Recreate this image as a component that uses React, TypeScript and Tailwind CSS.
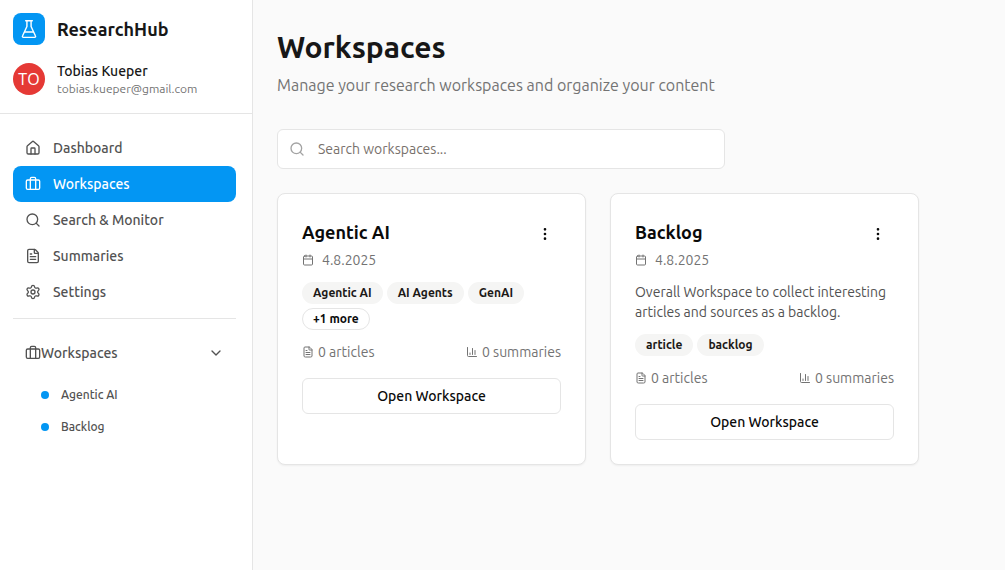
import React, { useState } from "react";
import {
  Briefcase,
  Calendar,
  ChartColumn,
  ChevronDown,
  EllipsisVertical,
  FileText,
  House,
  Search,
  Settings,
  type LucideIcon,
} from "lucide-react";

type Workspace = {
  name: string;
  date: string;
  description?: string;
  tags: string[];
  extraTags: number;
  articles: number;
  summaries: number;
};

const navItems: { label: string; icon: LucideIcon; active?: boolean }[] = [
  { label: "Dashboard", icon: House },
  { label: "Workspaces", icon: Briefcase, active: true },
  { label: "Search & Monitor", icon: Search },
  { label: "Summaries", icon: FileText },
  { label: "Settings", icon: Settings },
];

const workspaces: Workspace[] = [
  {
    name: "Agentic AI",
    date: "4.8.2025",
    tags: ["Agentic AI", "AI Agents", "GenAI"],
    extraTags: 1,
    articles: 0,
    summaries: 0,
  },
  {
    name: "Backlog",
    date: "4.8.2025",
    description: "Overall Workspace to collect interesting articles and sources as a backlog.",
    tags: ["article", "backlog"],
    extraTags: 0,
    articles: 0,
    summaries: 0,
  },
];

function FlaskIcon() {
  return (
    <svg
      className="size-5"
      viewBox="0 0 24 24"
      fill="none"
      stroke="currentColor"
      strokeWidth="1.7"
      strokeLinecap="round"
      strokeLinejoin="round"
      aria-hidden="true"
    >
      <path d="M9.5 2v7L4.2 20.4A1.1 1.1 0 0 0 5.2 22h13.6a1.1 1.1 0 0 0 1-1.6L14.5 9V2" />
      <path d="M8 2h8" />
      <path d="M7 15.5h10" />
    </svg>
  );
}

function Sidebar() {
  const [open, setOpen] = useState(true);
  return (
    <aside className="w-[253px] shrink-0 border-r border-[#e5e5e5] bg-white">
      <div className="flex flex-col gap-4 border-b border-[#e5e5e5] pt-[13px] pr-4 pb-4 pl-[13px]">
        <div className="flex items-center gap-3">
          <div className="flex size-8 items-center justify-center rounded-lg bg-[#0396f3] text-white">
            <FlaskIcon />
          </div>
          <span className="text-lg font-bold text-[#171717]">ResearchHub</span>
        </div>
        <div className="flex items-center gap-3">
          <div className="flex size-8 items-center justify-center rounded-full bg-[#e53935] font-['Open_Sans',sans-serif] text-base text-white">
            TO
          </div>
          <div className="min-w-0">
            <p className="truncate text-sm font-medium text-[#171717]">Tobias Kueper</p>
            <p className="truncate text-xs text-[#737373]">tobias.kueper@gmail.com</p>
          </div>
        </div>
      </div>
      <nav className="pt-4 pr-4 pl-[13px] text-sm font-medium text-[#525252]">
        <ul>
          {navItems.map(({ label, icon: Icon, active }) => (
            <li key={label}>
              <a
                href="#"
                aria-current={active ? "page" : undefined}
                className={
                  active
                    ? "flex items-center gap-3 rounded-lg bg-[#0396f3] px-3 py-2 text-white"
                    : "flex items-center gap-3 rounded-lg px-3 py-2"
                }
              >
                <Icon className="size-4" />
                {label}
              </a>
            </li>
          ))}
        </ul>
        <div className="mt-2 border-t border-[#e5e5e5] pt-4">
          <button
            type="button"
            aria-expanded={open}
            onClick={() => setOpen(!open)}
            className="flex w-full items-center justify-between px-3 py-2"
          >
            <span className="flex items-center">
              <Briefcase className="size-4" />
              Workspaces
            </span>
            <ChevronDown className="size-4" />
          </button>
          {open && (
            <ul className="mt-2 ml-4 text-xs">
              {workspaces.map((w) => (
                <li key={w.name}>
                  <a href="#" className="flex items-center gap-3 px-3 py-2">
                    <span className="size-2 rounded-full bg-[#0396f3]" />
                    {w.name}
                  </a>
                </li>
              ))}
            </ul>
          )}
        </div>
      </nav>
    </aside>
  );
}

function WorkspaceCard({ workspace: w }: { workspace: Workspace }) {
  return (
    <article className="rounded-lg border border-[#e5e5e5] bg-white p-6 shadow-xs">
      <div className="flex items-start justify-between">
        <div>
          <h2 className="text-lg font-bold text-[#0a0a0a]">{w.name}</h2>
          <div className="mt-1 flex items-center gap-2 text-sm text-[#737373]">
            <Calendar className="size-3" />
            {w.date}
          </div>
        </div>
        <button type="button" aria-label="Workspace actions" className="flex size-8 items-center justify-center text-[#0a0a0a]">
          <EllipsisVertical className="size-4" />
        </button>
      </div>
      {w.description && <p className="mt-3 text-sm text-[#525252]">{w.description}</p>}
      <div className="mt-3 flex flex-wrap gap-1 text-xs font-bold">
        {w.tags.map((t) => (
          <span key={t} className="rounded-full border border-transparent bg-[#f5f5f4] px-2.5 py-0.5 text-[#1c1917]">
            {t}
          </span>
        ))}
        {w.extraTags > 0 && (
          <span className="rounded-full border border-[#e5e5e5] px-2.5 py-0.5 text-[#0a0a0a]">
            +{w.extraTags} more
          </span>
        )}
      </div>
      <div className="mt-3 flex items-center justify-between text-sm text-[#737373]">
        <span className="flex items-center gap-1">
          <FileText className="size-3" />
          {w.articles} articles
        </span>
        <span className="flex items-center gap-1">
          <ChartColumn className="size-3" />
          {w.summaries} summaries
        </span>
      </div>
      <button
        type="button"
        className="mt-4 h-9 w-full rounded-md border border-[#e5e5e5] bg-white text-sm font-medium text-[#0a0a0a]"
      >
        Open Workspace
      </button>
    </article>
  );
}

export default function App() {
  return (
    <div className="flex min-h-screen bg-[#fafafa] font-[Ubuntu,'Open_Sans',sans-serif]">
      <Sidebar />
      <main className="min-w-0 flex-1 pt-[29px] pr-[86px] pb-6 pl-6">
        <h1 className="text-3xl font-bold text-[#171717]">Workspaces</h1>
        <p className="mt-2 text-base text-[#737373]">Manage your research workspaces and organize your content</p>
        <div className="relative mt-8 max-w-md">
          <Search className="absolute top-3 left-3 size-4 text-[#a3a3a3]" />
          <input
            type="search"
            aria-label="Search workspaces"
            placeholder="Search workspaces..."
            className="h-10 w-full rounded-md border border-[#e5e5e5] bg-white pr-3 pl-10 text-sm text-[#171717] placeholder:text-[#78716c]"
          />
        </div>
        <div className="mt-6 grid grid-cols-2 gap-6">
          {workspaces.map((w) => (
            <WorkspaceCard key={w.name} workspace={w} />
          ))}
        </div>
      </main>
    </div>
  );
}
